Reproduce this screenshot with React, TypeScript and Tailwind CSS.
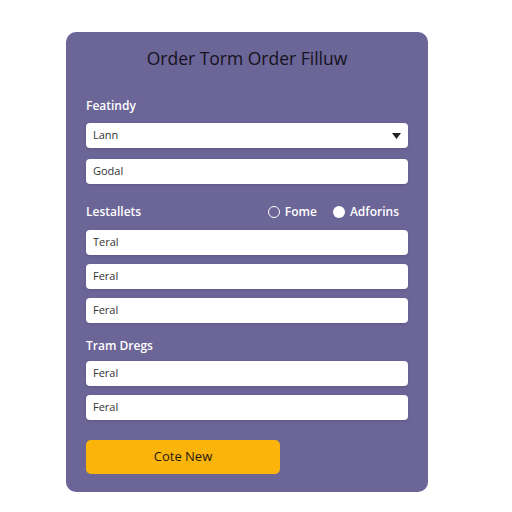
import React from "react";

const inputCls =
  "h-[25px] w-full rounded-[4px] bg-white px-[7px] flex items-center text-[11px] text-[#333] shadow-sm";

export default function App() {
  return (
    <div
      className="w-[512px] h-[512px] bg-white flex"
      style={{ fontFamily: '"Open Sans", "Liberation Sans", sans-serif' }}
    >
      <div className="ml-[66px] mt-[32px] w-[362px] h-[460px] rounded-[10px] bg-[#6c6597] px-[20px] flex flex-col">
        <div className="h-[50px] pt-[13px] text-center text-[17.5px] text-[#141220]">
          Order Torm Order Filluw
        </div>
        <div className="mt-[15px] text-[12px] font-semibold text-white leading-[18px]">Featindy</div>
        <div className={inputCls + " mt-[8px] justify-between"}>
          <span>Lann</span>
          <svg width="9" height="6" viewBox="0 0 9 6"><path d="M0 0h9L4.5 6z" fill="#222" /></svg>
        </div>
        <div className={inputCls + " mt-[11px]"}>Godal</div>
        <div className="mt-[19px] flex items-center justify-between h-[18px]">
          <span className="text-[12px] font-semibold text-white">Lestallets</span>
          <div className="mr-[9px] flex items-center gap-[16px] text-[12px] text-white font-semibold">
            <span className="flex items-center gap-[5px]">
              <span className="w-[12px] h-[12px] rounded-full border-[1.5px] border-white" />
              Fome
            </span>
            <span className="flex items-center gap-[5px]">
              <span className="w-[12px] h-[12px] rounded-full bg-white" />
              Adforins
            </span>
          </div>
        </div>
        <div className={inputCls + " mt-[9px]"}>Teral</div>
        <div className={inputCls + " mt-[9px]"}>Feral</div>
        <div className={inputCls + " mt-[9px]"}>Feral</div>
        <div className="mt-[14px] text-[12px] font-semibold text-white leading-[18px]">Tram Dregs</div>
        <div className={inputCls + " mt-[6px]"}>Feral</div>
        <div className={inputCls + " mt-[9px]"}>Feral</div>
        <div className="mt-[20px] w-[194px] h-[34px] rounded-[5px] bg-[#fbb40a] flex items-center justify-center text-[13px] font-medium text-[#1f1a10]">
          Cote New
        </div>
      </div>
    </div>
  );
}
